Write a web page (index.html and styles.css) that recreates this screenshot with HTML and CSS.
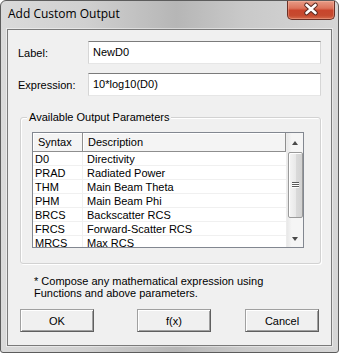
FILE: index.html
```html
<!DOCTYPE html>
<html>
<head>
<meta charset="UTF-8">
<title>Add Custom Output</title>
<link rel="stylesheet" href="styles.css">
</head>
<body>
<div class="window">
	<div class="titlebar">
		<span class="title">Add Custom Output</span>
		<div class="close">
			<svg width="48" height="19" viewBox="0 0 48 19">
				<path d="M19.5 5 L28.5 13 M28.5 5 L19.5 13" stroke="#5a2a22" stroke-width="4.6" stroke-linecap="round" fill="none"/>
				<path d="M19.5 5 L28.5 13 M28.5 5 L19.5 13" stroke="#ffffff" stroke-width="2.6" stroke-linecap="round" fill="none"/>
			</svg>
		</div>
	</div>
	<div class="client">
		<div class="field">
			<label>Label:</label>
			<div class="input">NewD0</div>
		</div>
		<div class="field second">
			<label>Expression:</label>
			<div class="input">10*log10(D0)</div>
		</div>

		<div class="group">
			<span class="legend">Available Output Parameters</span>
			<div class="listview">
				<div class="list">
					<div class="header">
						<div class="hcell c1">Syntax</div>
						<div class="hcell c2">Description</div>
					</div>
					<div class="row"><div class="cell c1">D0</div><div class="cell c2">Directivity</div></div>
					<div class="row"><div class="cell c1">PRAD</div><div class="cell c2">Radiated Power</div></div>
					<div class="row"><div class="cell c1">THM</div><div class="cell c2">Main Beam Theta</div></div>
					<div class="row"><div class="cell c1">PHM</div><div class="cell c2">Main Beam Phi</div></div>
					<div class="row"><div class="cell c1">BRCS</div><div class="cell c2">Backscatter RCS</div></div>
					<div class="row"><div class="cell c1">FRCS</div><div class="cell c2">Forward-Scatter RCS</div></div>
					<div class="row"><div class="cell c1">MRCS</div><div class="cell c2">Max RCS</div></div>
				</div>
				<div class="scrollbar">
					<div class="arrow up"></div>
					<div class="thumb"><div class="grip"></div></div>
					<div class="arrow down"></div>
				</div>
			</div>
		</div>

		<p class="note">* Compose any mathematical expression using<br>Functions and above parameters.</p>

		<div class="buttons">
			<button class="ok">OK</button>
			<button class="fx">f(x)</button>
			<button class="cancel">Cancel</button>
		</div>
	</div>
</div>
</body>
</html>
```
FILE: styles.css
```css
* {
	margin: 0;
	padding: 0;
	box-sizing: border-box;
}
body {
	width: 339px;
	height: 353px;
	overflow: hidden;
	background: #fff;
	font-family: "Liberation Sans", Arial, sans-serif;
	font-size: 11px;
	color: #000;
}
.window {
	width: 339px;
	height: 353px;
	border: 1px solid #5c5c5c;
	border-radius: 6px 6px 3px 3px;
	padding: 0 6px 6px;
	display: flex;
	flex-direction: column;
	background: linear-gradient(to right, #dadada 0%, #d0d0d0 25%, #b6b6b6 52%, #c9c9c9 72%, #d6d6d6 100%);
}
.titlebar {
	height: 28px;
	display: flex;
	align-items: flex-start;
}
.title {
	font-family: "Open Sans", "Liberation Sans", sans-serif;
	font-size: 12px;
	line-height: 16px;
	margin: 5px 0 0 1px;
}
.close {
	margin-left: auto;
	margin-right: -3px;
	width: 48px;
	height: 19px;
	border: 1px solid #6b3026;
	border-top: none;
	border-radius: 0 0 5px 5px;
	background: linear-gradient(#e79b86 0%, #dc735b 40%, #c9452c 52%, #c64a2f 80%, #d56a4c 100%);
	box-shadow: inset 0 0 0 1px rgba(255, 200, 180, 0.35);
	overflow: hidden;
}
.close svg {
	display: block;
	margin: -1px 0 0 -1px;
}
.client {
	flex: 1;
	background: #f0f0f0;
	border: 1px solid #7a7a7a;
	box-shadow: 0 0 0 1px rgba(255, 255, 255, 0.45);
	padding: 11px 10px 0 10px;
}
.field {
	display: flex;
	align-items: center;
	height: 23px;
}
.field.second {
	margin-top: 9px;
}
.field label {
	width: 70px;
}
.input {
	flex: 1;
	height: 23px;
	background: #fff;
	border: 1px solid #d6d6d6;
	border-top-color: #7b7b7b;
	border-bottom-color: #e6e6e6;
	padding: 0 4px;
	line-height: 20px;
}
.group {
	position: relative;
	margin: 21px 0 0 2px;
	border: 1px solid #d2d2d2;
	border-radius: 3px;
	box-shadow: inset 1px 1px 0 #fff, 1px 1px 0 #fff;
	padding: 14px 16px 15px 11px;
}
.legend {
	position: absolute;
	top: -7px;
	left: 6px;
	padding: 0 2px;
	line-height: 13px;
	background: #f0f0f0;
}
.listview {
	height: 116px;
	border: 1px solid #828790;
	background: #fff;
	display: flex;
	overflow: hidden;
}
.list {
	flex: 1;
}
.header {
	display: flex;
	height: 19px;
}
.hcell {
	background: #f4f4f4;
	border-right: 1px solid #8e8e8e;
	border-bottom: 1px solid #8e8e8e;
	box-shadow: inset 1px 1px 0 #fff;
	padding: 0 5px;
	line-height: 18px;
}
.c1 {
	width: 50px;
}
.c2 {
	flex: 1;
}
.row {
	display: flex;
	height: 14px;
	border-bottom: 1px solid #f0f0f0;
}
.cell {
	line-height: 13px;
	padding-top: 1px;
	white-space: nowrap;
	overflow: hidden;
}
.cell.c1 {
	padding-left: 2px;
	border-right: 1px solid #f0f0f0;
}
.cell.c2 {
	padding-left: 4px;
}
.scrollbar {
	width: 17px;
	display: flex;
	flex-direction: column;
	background: linear-gradient(to right, #e8e8e8, #f5f5f5 30%, #f5f5f5);
	border-left: 1px solid #ececec;
}
.arrow {
	height: 17px;
	position: relative;
}
.arrow::after {
	content: "";
	position: absolute;
	left: 5px;
	border-left: 3.5px solid transparent;
	border-right: 3.5px solid transparent;
}
.arrow.up::after {
	top: 8px;
	border-bottom: 4px solid #4a4a4a;
}
.arrow.down {
	margin-top: auto;
}
.arrow.down::after {
	top: 7px;
	border-top: 4px solid #4a4a4a;
}
.thumb {
	margin: 2px 0 0 1px;
	height: 66px;
	border: 1px solid #9a9a9a;
	border-radius: 2px;
	background: linear-gradient(to right, #f4f4f4, #e9e9e9 50%, #dadada 52%, #d2d2d2);
	box-shadow: inset 1px 1px 0 #fff;
	display: flex;
	align-items: center;
	justify-content: center;
}
.grip {
	width: 7px;
	height: 6px;
	background: repeating-linear-gradient(#5a5a5a 0 1px, #fff 1px 2px);
}
.note {
	margin-top: 11px;
	padding-left: 16px;
	line-height: 12px;
}
.buttons {
	display: flex;
	margin: 10px 0 0 2px;
}
button {
	width: 74px;
	height: 23px;
	font-family: "Liberation Sans", Arial, sans-serif;
	font-size: 11px;
	color: #000;
	background: #f0f0f0;
	border: 1px solid;
	border-color: #a0a0a0 #5f5f5f #5f5f5f #a0a0a0;
	box-shadow: inset 1px 1px 0 #fff, inset -1px -1px 0 #a0a0a0;
}
.fx {
	margin-left: 43px;
}
.cancel {
	margin-left: 34px;
}
```
